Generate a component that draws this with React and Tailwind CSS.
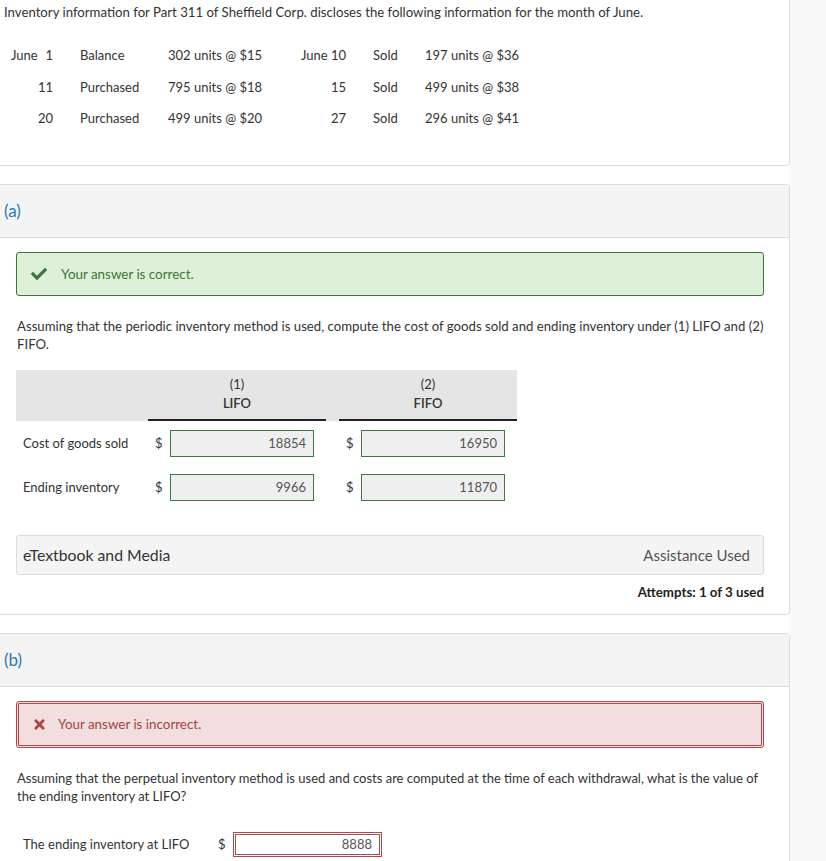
import React from "react";
import { FaCheck, FaTimes } from "react-icons/fa";

const rows = [
  { m: "June", d: "1", what: "Balance", qty: "302 units @ $15", m2: "June 10", what2: "Sold", qty2: "197 units @ $36" },
  { m: "", d: "11", what: "Purchased", qty: "795 units @ $18", m2: "15", what2: "Sold", qty2: "499 units @ $38" },
  { m: "", d: "20", what: "Purchased", qty: "499 units @ $20", m2: "27", what2: "Sold", qty2: "296 units @ $41" },
];

const Card = ({ children, className = "" }) => (
  <div
    className={`bg-white border border-l-0 border-[#dcdcdc] rounded-r-[4px] ${className}`}
  >
    {children}
  </div>
);

const PartHeader = ({ label }) => (
  <div className="h-[53px] bg-[#f4f4f4] border-b border-[#dcdcdc] flex items-center pl-[4px]">
    <span className="text-[17px] text-[#2b78b6]">{label}</span>
  </div>
);

const AnswerInput = ({ value, width = "w-[144px]", bad }) => (
  <div
    className={`${width} ${
      bad
        ? "h-[25px] bg-white border-[3px] border-double border-[#b5474a]"
        : "h-[27px] bg-[#efefef] border border-[#3d7a3d]"
    } flex items-center justify-end pr-[7px] text-[13px] text-[#555]`}
  >
    {value}
  </div>
);

export default function App() {
  return (
    <div className="flex min-h-screen bg-white font-['Lato','Liberation_Sans',sans-serif] text-[#333]">
      <div className="w-[790px] shrink-0 bg-white">
        {/* problem statement */}
        <div className="h-[166px] bg-white border-r border-b border-[#dcdcdc] rounded-br-[4px] pl-[4px] pt-[3px]">
          <p className="text-[13.2px] leading-[18px]">
            Inventory information for Part 311 of Sheffield Corp. discloses the following information for the month of June.
          </p>
          <div className="mt-[19px] text-[13px]">
            {rows.map((r, i) => (
              <div key={i} className="flex items-center h-[31.5px]">
                <div className="w-[49px] pl-[7px] flex justify-between">
                  <span>{r.m}</span>
                  <span>{r.d}</span>
                </div>
                <div className="ml-[27px] w-[88px]">{r.what}</div>
                <div className="w-[132px]">{r.qty}</div>
                <div className="w-[46px] text-right">{r.m2}</div>
                <div className="ml-[27px] w-[52px]">{r.what2}</div>
                <div>{r.qty2}</div>
              </div>
            ))}
          </div>
        </div>

        {/* part (a) */}
        <Card className="mt-[18px] h-[431px]">
          <PartHeader label="(a)" />
          <div className="pl-[16px] pr-[25px] pt-[14px]">
            <div className="h-[44px] bg-[#dff0d8] border border-[#3c763d] rounded-[3px] flex items-center pl-[14px]">
              <FaCheck className="w-[16px] h-[16px] text-[#3c763d]" />
              <span className="ml-[14px] text-[13.4px] text-[#3c763d]">Your answer is correct.</span>
            </div>
            <p className="mt-[21px] pl-[1px] text-[13.2px] leading-[18px]">
              Assuming that the periodic inventory method is used, compute the cost of goods sold and ending inventory under (1) LIFO and (2) FIFO.
            </p>

            <div className="mt-[17px] w-[501px]">
              <div className="grid grid-cols-[132px_178px_13px_178px] h-[51px] bg-[#e5e5e5]">
                <div />
                <div className="border-b-2 border-[#222] text-center text-[13px] leading-[19px] pt-[5px] font-semibold">
                  <div className="font-normal">(1)</div>
                  <div>LIFO</div>
                </div>
                <div />
                <div className="border-b-2 border-[#222] text-center text-[13px] leading-[19px] pt-[5px] font-semibold">
                  <div className="font-normal">(2)</div>
                  <div>FIFO</div>
                </div>
              </div>

              {[
                { label: "Cost of goods sold", a: "18854", b: "16950" },
                { label: "Ending inventory", a: "9966", b: "11870" },
              ].map((r, i) => (
                <div
                  key={i}
                  className={`grid grid-cols-[132px_178px_13px_178px] items-center ${i === 0 ? "mt-[9px]" : "mt-[17px]"}`}
                >
                  <div className="pl-[7px] text-[13px]">{r.label}</div>
                  <div className="flex items-center pl-[7px]">
                    <span className="w-[15px] text-[13px]">$</span>
                    <AnswerInput value={r.a} />
                  </div>
                  <div />
                  <div className="flex items-center pl-[7px]">
                    <span className="w-[15px] text-[13px]">$</span>
                    <AnswerInput value={r.b} />
                  </div>
                </div>
              ))}
            </div>

            <div className="mt-[34px] h-[40px] bg-[#f4f4f4] border border-[#dcdcdc] rounded-[3px] flex items-center justify-between pl-[6px] pr-[13px]">
              <span className="text-[15.8px] text-[#333]">eTextbook and Media</span>
              <span className="text-[15px] text-[#555]">Assistance Used</span>
            </div>
            <div className="mt-[8px] text-right text-[13.3px] font-bold text-[#222]">Attempts: 1 of 3 used</div>
          </div>
        </Card>

        {/* part (b) */}
        <Card className="mt-[18px] border-b-0 rounded-br-none h-[240px]">
          <PartHeader label="(b)" />
          <div className="pl-[16px] pr-[25px] pt-[14px]">
            <div className="h-[47px] bg-[#f2dede] border-[3px] border-double border-[#b5474a] rounded-[3px] flex items-center pl-[13px]">
              <FaTimes className="w-[15px] h-[15px] text-[#a94442]" />
              <span className="ml-[11px] text-[13.4px] text-[#a94442]">Your answer is incorrect.</span>
            </div>
            <p className="mt-[21px] pl-[1px] text-[13px] leading-[18px]">
              Assuming that the perpetual inventory method is used and costs are computed at the time of each withdrawal, what is the value of the ending inventory at LIFO?
            </p>
            <div className="mt-[27px] flex items-center">
              <div className="w-[202px] pl-[7px] text-[13px]">The ending inventory at LIFO</div>
              <span className="w-[15px] text-[13px]">$</span>
              <AnswerInput value="8888" width="w-[149px]" bad />
            </div>
          </div>
        </Card>
      </div>
      <div className="flex-1 bg-[#f9f9f9]" />
    </div>
  );
}
